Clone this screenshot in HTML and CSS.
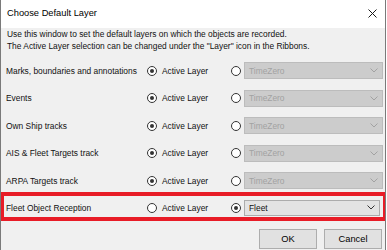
FILE: index.html
```html
<!DOCTYPE html>
<html lang="en">
<head>
    <meta charset="UTF-8">
    <meta name="viewport" content="width=device-width, initial-scale=1.0">
    <title>Choose Default Layer</title>
    <link rel="stylesheet" href="styles.css">
</head>
<body>
    <div class="window">
        <div class="titlebar">
            <span class="title">Choose Default Layer</span>
            <svg class="close" width="9" height="9" viewBox="0 0 9 9"><path d="M0.5 0.5 L8.5 8.5 M8.5 0.5 L0.5 8.5" stroke="#1a1a1a" stroke-width="1" fill="none"/></svg>
        </div>
        <div class="content">
            <p class="intro">Use this window to set the default layers on which the objects are recorded.<br>The Active Layer selection can be changed under the "Layer" icon in the Ribbons.</p>

            <div class="rows">
                <div class="row">
                    <span class="label">Marks, boundaries and annotations</span>
                    <span class="radio checked"></span>
                    <span class="opt">Active Layer</span>
                    <span class="radio"></span>
                    <div class="combo disabled"><span>TimeZero</span><svg width="8" height="5" viewBox="0 0 8 5"><path d="M0.5 0.5 L4 4 L7.5 0.5" stroke="currentColor" fill="none"/></svg></div>
                </div>
                <div class="row">
                    <span class="label">Events</span>
                    <span class="radio checked"></span>
                    <span class="opt">Active Layer</span>
                    <span class="radio"></span>
                    <div class="combo disabled"><span>TimeZero</span><svg width="8" height="5" viewBox="0 0 8 5"><path d="M0.5 0.5 L4 4 L7.5 0.5" stroke="currentColor" fill="none"/></svg></div>
                </div>
                <div class="row">
                    <span class="label">Own Ship tracks</span>
                    <span class="radio checked"></span>
                    <span class="opt">Active Layer</span>
                    <span class="radio"></span>
                    <div class="combo disabled"><span>TimeZero</span><svg width="8" height="5" viewBox="0 0 8 5"><path d="M0.5 0.5 L4 4 L7.5 0.5" stroke="currentColor" fill="none"/></svg></div>
                </div>
                <div class="row">
                    <span class="label">AIS &amp; Fleet Targets track</span>
                    <span class="radio checked"></span>
                    <span class="opt">Active Layer</span>
                    <span class="radio"></span>
                    <div class="combo disabled"><span>TimeZero</span><svg width="8" height="5" viewBox="0 0 8 5"><path d="M0.5 0.5 L4 4 L7.5 0.5" stroke="currentColor" fill="none"/></svg></div>
                </div>
                <div class="row">
                    <span class="label">ARPA Targets track</span>
                    <span class="radio checked"></span>
                    <span class="opt">Active Layer</span>
                    <span class="radio"></span>
                    <div class="combo disabled"><span>TimeZero</span><svg width="8" height="5" viewBox="0 0 8 5"><path d="M0.5 0.5 L4 4 L7.5 0.5" stroke="currentColor" fill="none"/></svg></div>
                </div>
                <!-- highlighted row -->
                <div class="row marked">
                    <span class="label">Fleet Object Reception</span>
                    <span class="radio"></span>
                    <span class="opt">Active Layer</span>
                    <span class="radio checked"></span>
                    <div class="combo"><span>Fleet</span><svg width="8" height="5" viewBox="0 0 8 5"><path d="M0.5 0.5 L4 4 L7.5 0.5" stroke="currentColor" fill="none"/></svg></div>
                </div>
            </div>

            <div class="actions">
                <button>OK</button>
                <button>Cancel</button>
            </div>
        </div>
    </div>
</body>
</html>
```

FILE: styles.css
```css
body { margin: 0; background: #ffffff; font-family: "Liberation Sans", Arial, sans-serif; color: #000; }
.window { width: 386px; height: 250px; box-sizing: border-box; border-left: 1px solid #7a7a7a; border-right: 1px solid #7a7a7a; background: #f0f0f0; overflow: hidden; }

.titlebar { height: 28px; background: #fff; display: flex; align-items: center; justify-content: space-between; padding: 0 7px 2px 6px; box-sizing: border-box; }
.title { font-size: 9.3px; color: #000; }
.close { display: block; margin-right: 1px; }

.content { display: flex; flex-direction: column; }
.intro { margin: 0; padding-left: 6px; font-size: 8.4px; line-height: 12px; color: #111; }

.rows { margin-top: 5.3px; display: flex; flex-direction: column; }
.row { height: 27.4px; display: grid; grid-template-columns: 141px 15px 69px 13px 139px; align-items: center; padding-left: 5px; font-size: 8.4px; }
.label { color: #111; }
.opt { color: #111; }

.radio { width: 10px; height: 10px; box-sizing: border-box; border: 1px solid #333; border-radius: 50%; background: #fff; display: flex; align-items: center; justify-content: center; }
.radio.checked::after { content: ""; width: 4px; height: 4px; border-radius: 50%; background: #333; }

.combo { height: 17px; box-sizing: border-box; border: 1px solid #bcbcbc; background: #cccccc; color: #a2a2a2; display: flex; align-items: center; justify-content: space-between; padding: 0 4px 0 4px; }
.combo svg { display: block; }
.combo:not(.disabled) { background: #e3e3e3; border-color: #acacac; color: #111; height: 16px; }
.combo:not(.disabled) svg { color: #333; }

.row.marked { height: 29px; margin: -2.3px -2px 0 -1px; box-sizing: border-box; border: 4px solid #e81c27; padding: 3px 0 0 2px; grid-template-columns: 141px 15px 69px 13px 136px; }

.actions { display: flex; justify-content: flex-end; gap: 7px; padding-right: 3px; margin-top: 8px; }
.actions button { width: 58px; height: 20px; margin: 0; padding: 0; border: 1px solid #adadad; background: #e1e1e1; font-family: "Liberation Sans", Arial, sans-serif; font-size: 9.3px; color: #000; }
```
